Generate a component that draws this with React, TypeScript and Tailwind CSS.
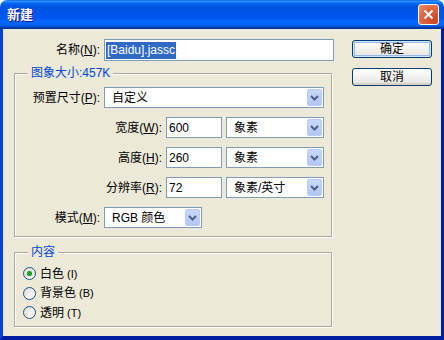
import React from 'react';

const FONT = { fontFamily: '"Liberation Sans", "Noto Sans CJK SC", sans-serif' };

function Chevron() {
  return (
    <svg width="9" height="6" viewBox="0 0 9 6">
      <path d="M1 1 L4.5 4.5 L8 1" fill="none" stroke="#4D6185" strokeWidth="2" />
    </svg>
  );
}

function Select({ value, width }: { value: string; width: string }) {
  return (
    <div className={`${width} h-[21px] flex items-center border border-[#7F9DB9] bg-white`}>
      <span className="flex-1 pl-[7px] text-[12px] text-black leading-none">{value}</span>
      <div className="w-[15px] h-[17px] mr-[1px] flex items-center justify-center rounded-[2px] bg-gradient-to-b from-[#C8D8FC] to-[#B2C6F6] border border-[#B9CBF8]">
        <Chevron />
      </div>
    </div>
  );
}

function Label({ text, hot, width }: { text: string; hot: string; width: string }) {
  return (
    <span className={`${width} text-right text-[12px] text-black pr-[4px] whitespace-nowrap`}>
      {text}(<span className="underline">{hot}</span>):
    </span>
  );
}

function SizeRow({ label, hot, value, unit }: { label: string; hot: string; value: string; unit: string }) {
  return (
    <div className="flex items-center h-[21px]">
      <Label text={label} hot={hot} width="w-[151px]" />
      <div className="w-[56px] h-[21px] flex items-center border border-[#7F9DB9] bg-white pl-[2px] text-[12px]">{value}</div>
      <div className="w-[4px]" />
      <Select value={unit} width="w-[98px]" />
    </div>
  );
}

function Radio({ label, hot, checked }: { label: string; hot: string; checked?: boolean }) {
  return (
    <div className="flex items-center h-[19.5px]">
      <div className="w-[13px] h-[13px] rounded-full border border-[#1C5180] bg-gradient-to-br from-[#DCDCD7] to-white flex items-center justify-center">
        {checked && <div className="w-[5px] h-[5px] rounded-full bg-[#21A121] shadow-[0_0_1px_#5FD45F]" />}
      </div>
      <span className="ml-[4px] text-[12px] text-black">
        {label}
        <span className="text-[11px] ml-[3px]">({hot})</span>
      </span>
    </div>
  );
}

function Button({ text, primary }: { text: string; primary?: boolean }) {
  return (
    <button
      className={`w-[80px] h-[18px] rounded-[3px] border border-[#003C74] bg-gradient-to-b from-white to-[#E6E5DE] text-[12px] text-black leading-none flex items-center justify-center ${
        primary ? 'shadow-[inset_0_0_0_1px_#CEE7FF,inset_0_0_0_2px_#98B8EA]' : 'shadow-[inset_0_-2px_0_#D6D0C5]'
      }`}
    >
      {text}
    </button>
  );
}

export default function App() {
  return (
    <div style={FONT} className="w-[444px] h-[340px] flex flex-col bg-white">
      {/* title bar */}
      <div className="h-[29px] shrink-0 rounded-t-[7px] flex items-center justify-between pl-[7px] pr-[5px] bg-[linear-gradient(to_bottom,#0058EE_0%,#3593FF_4%,#288EFF_6%,#127DFF_8%,#036FFC_10%,#0262EE_14%,#0057E5_20%,#0054E3_24%,#0055EB_56%,#005BF5_66%,#026AFE_76%,#0062EF_86%,#0052D6_92%,#0040AB_94%,#003092_100%)]">
        <span className="text-white font-bold text-[13px] [text-shadow:1px_1px_0_#0F1089] pt-[1px]">新建</span>
        <div className="w-[21px] h-[21px] rounded-[3px] border border-white bg-[radial-gradient(circle_at_80%_80%,#CC4622_0%,#DC6540_55%,#EB8E70_100%)] flex items-center justify-center">
          <svg width="11" height="11" viewBox="0 0 11 11">
            <path d="M1.5 1.5 L9.5 9.5 M9.5 1.5 L1.5 9.5" stroke="white" strokeWidth="2" />
          </svg>
        </div>
      </div>

      {/* client area */}
      <div className="flex-1 flex border-l-[3px] border-l-[#0841D8] border-r-[3px] border-r-[#001DA0] border-b-[4px] border-b-[#001DA0] bg-[#ECE9D8]">
        <div className="flex flex-col pl-[11px] pt-[10px]">
          {/* name */}
          <div className="flex items-center h-[22px]">
            <Label text="名称" hot="N" width="w-[90px]" />
            <div className="w-[230px] h-[22px] flex items-center border border-[#7F9DB9] bg-white pl-[1px]">
              <span className="bg-[#316AC5] text-white text-[12px] px-[1px] leading-[17px]">[Baidu].jassc</span>
            </div>
          </div>

          {/* image size */}
          <fieldset className="mt-[5px] w-[318px] border border-[#ACA899] shadow-[inset_1px_1px_0_#fff,1px_1px_0_#fff]">
            <legend className="ml-[13px] px-[3px] text-[12px] leading-[14px] text-[#0046D5] bg-[#ECE9D8]">图象大小:457K</legend>
            <div className="flex flex-col gap-[9px] pt-[7px] pb-[8px]">
              <div className="flex items-center h-[21px]">
                <Label text="预置尺寸" hot="P" width="w-[89px]" />
                <Select value="自定义" width="w-[220px]" />
              </div>
              <SizeRow label="宽度" hot="W" value="600" unit="象素" />
              <SizeRow label="高度" hot="H" value="260" unit="象素" />
              <SizeRow label="分辨率" hot="R" value="72" unit="象素/英寸" />
              <div className="flex items-center h-[21px]">
                <Label text="模式" hot="M" width="w-[89px]" />
                <Select value="RGB 颜色" width="w-[98px]" />
              </div>
            </div>
          </fieldset>

          {/* contents */}
          <fieldset className="mt-[8px] w-[318px] border border-[#ACA899] shadow-[inset_1px_1px_0_#fff,1px_1px_0_#fff]">
            <legend className="ml-[13px] px-[3px] text-[12px] leading-[14px] text-[#0046D5] bg-[#ECE9D8]">内容</legend>
            <div className="flex flex-col pl-[8px] pt-[5px] pb-[3px]">
              <Radio label="白色" hot="I" checked />
              <Radio label="背景色" hot="B" />
              <Radio label="透明" hot="T" />
            </div>
          </fieldset>
        </div>

        {/* buttons */}
        <div className="flex flex-col gap-[10px] pl-[18px] pt-[11px]">
          <Button text="确定" primary />
          <Button text="取消" />
        </div>
      </div>
    </div>
  );
}
